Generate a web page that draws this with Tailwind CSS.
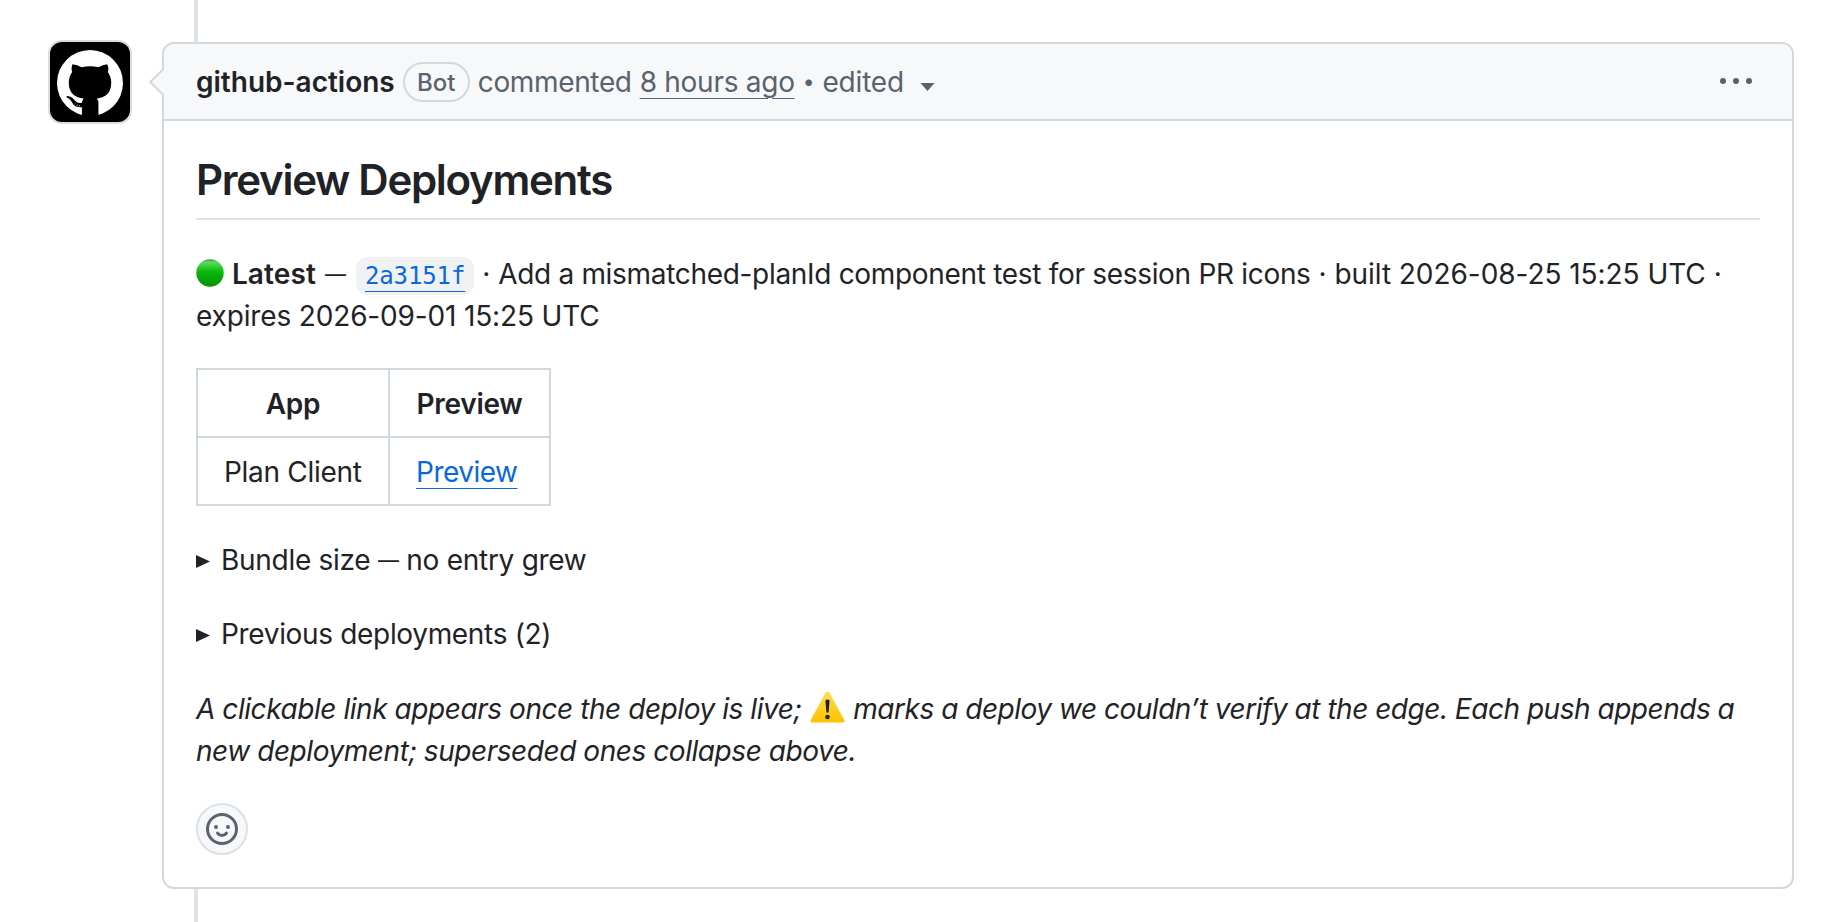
<!DOCTYPE html>
<html lang="en">
  <head>
    <meta charset="UTF-8" />
    <title>Preview Deployments</title>
    <script src="https://cdn.jsdelivr.net/npm/@tailwindcss/browser@4"></script>
  </head>
  <body class="bg-white font-['Inter','Noto_Sans',sans-serif] text-[28px] leading-[42px] text-[#1f2328]">
    <div class="relative flex h-[922px] items-start overflow-hidden pt-[42px] pl-[50px]">
      <!-- timeline rail -->
      <div class="absolute top-0 left-[194px] h-full w-1 bg-[#e0e3e5]"></div>

      <!-- avatar -->
      <div class="h-20 w-20 shrink-0 rounded-xl bg-black pt-2 pl-[7px] shadow-[0_0_0_2px_#dcdcdc]">
        <svg class="h-[66px] w-[66px]" viewBox="52 59 196 196">
          <circle cx="150" cy="157" r="98" fill="#fff" />
          <path d="M98 101Q112 102 125 110Q150 105 175 110Q188 102 201 101Q207 113 203 124Q213 138 213 156C213 186 197 200 170 203Q176 208 175 216V258H126V229Q106 230 100 220Q92 203 80 199Q80 195 86 196Q98 198 106 210Q112 219 126 216Q127 208 131 203C104 200 87 186 87 156Q87 138 97 124Q93 113 98 101Z" />
          <path d="M104 220l3-3M111 225l2-4M118 227l1-4" stroke="#fff" stroke-width="2" />
        </svg>
      </div>

      <main class="relative ml-8 h-[847px] w-[1632px] rounded-xl border-2 border-[#d1d9e0] bg-white">
        <header class="flex h-[77px] items-center rounded-t-[10px] border-b-2 border-[#d1d9e0] bg-[#f6f8fa] pr-10 pl-8 text-[#59636e]">
          <svg class="absolute top-[23px] -left-4 h-[30px] w-4" viewBox="0 0 16 30">
            <path d="M16 1.500L2.300 15L16 28.500" fill="#f6f8fa" stroke="#d1d9e0" stroke-width="2" />
          </svg>
          <b class="font-semibold text-[#1f2328]">github-actions</b>
          <span class="ml-2 flex h-10 w-[67px] items-center justify-center rounded-full border-2 border-[#d1d9e0] pt-0.5 text-2xl font-medium">Bot</span>
          <span class="ml-2 tracking-[-0.35px]">commented</span>
          <a class="ml-2 tracking-[-0.27px] underline decoration-1 underline-offset-[6px]">8 hours ago</a>
          <span class="ml-2 text-[21px]">•</span>
          <span class="ml-2 tracking-[-0.2px]">edited</span>
          <svg class="mt-[11px] ml-4 h-2 w-[15px]" viewBox="0 0 15 8" fill="#59636e"><path d="M0.500 0h14L7.500 8z" /></svg>
          <svg class="mb-0.5 ml-auto h-2 w-8" viewBox="0 0 32 8" fill="#59636e"><circle cx="3" cy="4" r="3" /><circle cx="16" cy="4" r="3" /><circle cx="29" cy="4" r="3" /></svg>
        </header>

        <div class="px-8 pt-8 whitespace-nowrap">
          <h2 class="mb-8 h-[67px] border-b-2 border-[#dde2e7] text-[42px] leading-[54px] font-semibold tracking-[-1.28px]">Preview Deployments</h2>
          <div class="mb-[31px] h-[85px] pt-px">
            <p class="h-[42px]">
              <svg class="inline-block h-7 w-7 -translate-y-px align-[-4px]" viewBox="0 0 28 28">
                <defs>
                  <linearGradient id="green" x1="0" y1="0" x2="0" y2="1">
                    <stop offset="0" stop-color="#2a9a2c" />
                    <stop offset=".1" stop-color="#5fdc60" />
                    <stop offset=".45" stop-color="#08b80b" />
                    <stop offset="1" stop-color="#059205" />
                  </linearGradient>
                </defs>
                <circle cx="14" cy="14" r="13.700" fill="url(#green)" />
              </svg>
              <b class="font-semibold tracking-[0.15px]">Latest</b>
              <span class="mx-px align-[2px] text-[21px] leading-none">—</span>
              <code class="ml-px rounded-xl bg-[#eff1f3] px-[9px] py-[5px] font-['DejaVu_Sans_Mono',monospace] text-[24px] tracking-[-0.1px] text-[#0969da] underline decoration-1 underline-offset-[7px]">2a3151f</code>
              · <span class="tracking-[-0.31px]">Add a mismatched-planId component test for session PR icons</span> · <span class="tracking-[-0.05px]">built 2026-08-25 15:25 UTC</span> ·
            </p>
            <p class="tracking-[-0.15px]">expires 2026-09-01 15:25 UTC</p>
          </div>

          <table class="mb-[33px] border-collapse">
            <tr class="h-[68px]">
              <th class="w-[192px] border-2 border-[#d1d9e0] pt-0.5 font-semibold tracking-[-0.2px]">App</th>
              <th class="w-[161px] border-2 border-[#d1d9e0] pt-0.5 font-semibold tracking-[-0.25px]">Preview</th>
            </tr>
            <tr class="h-[68px]">
              <td class="border-2 border-[#d1d9e0] px-[26px] pt-0.5 tracking-[-0.3px]">Plan Client</td>
              <td class="border-2 border-[#d1d9e0] px-[26px] pt-0.5 tracking-[-0.5px]"><a class="text-[#0969da] underline decoration-1 underline-offset-[6px]">Preview</a></td>
            </tr>
          </table>

          <p class="mb-8 flex items-center gap-[11px] tracking-[-0.28px]">
            <svg class="mt-0.5 h-[13px] w-3.5" viewBox="0 0 14 13" fill="#1f2328"><path d="M0 0L14 6.500L0 13z" /></svg>
            <span>Bundle size <span class="align-[2px] text-[21px] leading-none">—</span> no entry grew</span>
          </p>
          <p class="mb-[33px] flex items-center gap-[11px] tracking-[-0.33px]">
            <svg class="mt-0.5 h-[13px] w-3.5" viewBox="0 0 14 13" fill="#1f2328"><path d="M0 0L14 6.500L0 13z" /></svg>
            <span>Previous deployments (2)</span>
          </p>
          <p class="mb-[31px] h-[84px] tracking-[-0.44px] italic">
            A clickable link appears once the deploy is live;
            <svg class="mx-px inline-block h-8 w-[35px] align-[-4px]" viewBox="0 0 35 32">
              <defs>
                <linearGradient id="amber" x1="0" y1="0" x2="0" y2="1">
                  <stop offset="0" stop-color="#ffdd55" />
                  <stop offset="1" stop-color="#fdc200" />
                </linearGradient>
              </defs>
              <path d="M15.700 1.600Q17.500-.6 19.300 1.600L34.300 29Q35 31.500 32.500 31.500H2.500Q0 31.500.7 29Z" fill="url(#amber)" />
              <path d="M15.400 9.500Q17.500 7.300 19.600 9.500L18.600 21.500H16.400Z" fill="#222" />
              <circle cx="17.500" cy="26" r="2.300" fill="#222" />
            </svg>
            <span class="tracking-[-0.48px]">marks a deploy we couldn’t verify at the edge. Each push appends a</span><br />
            new deployment; superseded ones collapse above.
          </p>

          <button class="flex h-[52px] w-[52px] items-center justify-center rounded-full border-2 border-[#dce1e7] bg-[#f6f8fa]">
            <svg class="h-8 w-8" viewBox="0 0 16 16" fill="#59636e">
              <path d="M8 0a8 8 0 1 1 0 16A8 8 0 0 1 8 0ZM1.500 8a6.500 6.500 0 1 0 13 0 6.500 6.500 0 0 0-13 0ZM12 7a1 1 0 1 1-2 0 1 1 0 0 1 2 0ZM5 8a1 1 0 1 1 0-2 1 1 0 0 1 0 2Z" />
              <path d="M5.750 10.070C6.300 10.850 7.100 11.250 8 11.250S9.700 10.850 10.250 10.070" fill="none" stroke="#59636e" stroke-width="1.500" stroke-linecap="round" />
            </svg>
          </button>
        </div>
      </main>
    </div>
  </body>
</html>
